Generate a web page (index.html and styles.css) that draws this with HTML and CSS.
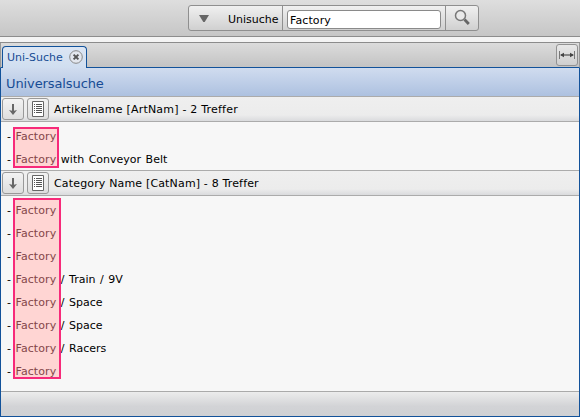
FILE: index.html
```html
<!DOCTYPE html>
<html lang="de">
<head>
<meta charset="utf-8">
<title>Universalsuche</title>
<link rel="stylesheet" href="styles.css">
</head>
<body>
<header class="toolbar">
  <div class="search">
    <button class="scope"><svg class="caret" width="12" height="9" viewBox="0 0 12 9"><path d="M1 1h10L6.7 8H5.3z" fill="#666"/></svg><span>Unisuche</span></button>
    <div class="field"><input type="text" value="Factory"></div>
    <button class="go" aria-label="Suchen"><svg width="18" height="18" viewBox="0 0 18 18" fill="none" stroke="#777"><circle cx="7.500" cy="6.500" r="5" fill="#e9e9e9" stroke-width="1.500"/><path d="M11.500 10.500l4.300 4.500" stroke="#666" stroke-width="2.800"/></svg></button>
  </div>
</header>
<main class="panel">
  <nav class="tabs">
    <div class="tab"><span class="tab-name">Uni-Suche</span><svg width="14" height="14" viewBox="0 0 14 14" fill="none"><circle cx="7" cy="7" r="6.300" fill="#e3e7ee" stroke="#888"/><path d="M4.600 4.600l4.800 4.800M9.400 4.600L4.600 9.400" stroke="#555" stroke-width="2"/></svg></div>
    <button class="fit" aria-label="Breite"><svg width="16" height="8" viewBox="0 0 16 8"><path d="M.5 0v8M15.5 0v8" stroke="#777"/><path d="M2 4h12" stroke="#333"/><path d="M1 4l4-2.200v4.400zM15 4l-4-2.200v4.400z" fill="#444"/></svg></button>
  </nav>
  <div class="content">
    <h1>Universalsuche</h1>
    <section>
      <div class="group">
        <button class="tool"><svg width="22" height="22" viewBox="0 0 22 22"><path d="M11 6v8" stroke="#666" stroke-width="2"/><path d="M7 12l4 1 4-1-4 5z" fill="#666"/></svg></button>
        <button class="tool"><svg width="22" height="22" viewBox="0 0 22 22"><path d="M5.500 3.500h11v15h-11z" fill="#fff" stroke="#666"/><path d="M7 6.500h1m1 0h6M7 8.500h1m1 0h6M7 10.500h1m1 0h6M7 12.500h1m1 0h6M7 14.500h1m1 0h6" stroke="#555"/></svg></button>
        <span class="label artikel">Artikelname [ArtNam] - 2 Treffer</span>
      </div>
      <ul class="hits short">
        <li>- <mark>Factory</mark></li>
        <li>- <mark>Factory</mark> with Conveyor Belt</li>
      </ul>
    </section>
    <section>
      <div class="group">
        <button class="tool"><svg width="22" height="22" viewBox="0 0 22 22"><path d="M11 6v8" stroke="#666" stroke-width="2"/><path d="M7 12l4 1 4-1-4 5z" fill="#666"/></svg></button>
        <button class="tool"><svg width="22" height="22" viewBox="0 0 22 22"><path d="M5.500 3.500h11v15h-11z" fill="#fff" stroke="#666"/><path d="M7 6.500h1m1 0h6M7 8.500h1m1 0h6M7 10.500h1m1 0h6M7 12.500h1m1 0h6M7 14.500h1m1 0h6" stroke="#555"/></svg></button>
        <span class="label">Category Name [CatNam] - 8 Treffer</span>
      </div>
      <ul class="hits long">
        <li>- <mark>Factory</mark></li>
        <li>- <mark>Factory</mark></li>
        <li>- <mark>Factory</mark></li>
        <li>- <mark>Factory</mark> / Train / 9V</li>
        <li>- <mark>Factory</mark> / Space</li>
        <li>- <mark>Factory</mark> / Space</li>
        <li>- <mark>Factory</mark> / Racers</li>
        <li>- <mark>Factory</mark></li>
      </ul>
    </section>
    <footer></footer>
  </div>
</main>
</body>
</html>
```
FILE: styles.css
```css
*, *::before, *::after { box-sizing: border-box; }

body {
  margin: 0;
  height: 417px;
  display: flex;
  flex-direction: column;
  overflow: hidden;
  background: #f4f4f4;
  color: #000;
  font: 11px "DejaVu Sans", Verdana, sans-serif;
}

button {
  display: flex;
  align-items: center;
  justify-content: center;
  margin: 0;
  padding: 0;
  border: 0;
  background: none;
  color: inherit;
  font: inherit;
}

svg { display: block; flex: none; }

.toolbar {
  height: 37px;
  padding: 5px 0 0 188px;
  border-bottom: 1px solid #8d8d8d;
  background: linear-gradient(#dedede, #c6c6c6);
}

.search {
  display: flex;
  width: 291px;
  height: 26px;
  border: 1px solid #8f8f8f;
  border-radius: 3px;
  background: linear-gradient(#f0f0f0, #d0d0d0);
}

.scope { width: 94px; justify-content: flex-start; padding-left: 9px; border-right: 1px solid #8f8f8f; }
.scope span { margin: 2px 0 0 18px; }
.field { width: 163px; padding: 4px 0 0 4px; border-right: 1px solid #8f8f8f; }
.field input {
  display: block;
  width: 154px;
  height: 19px;
  padding: 1px 2px 0;
  border: 1px solid #8a8a8a;
  border-radius: 3px;
  background: #fff;
  font: inherit;
  letter-spacing: .1px;
}
.go { flex: 1; }

.panel {
  flex: 1;
  display: flex;
  flex-direction: column;
  margin-top: 5px;
  border-top: 1px solid #8c8c8c;
}

.tabs {
  display: flex;
  justify-content: space-between;
  height: 25px;
  border-left: 1px solid #999;
  border-right: 1px solid #999;
  border-bottom: 1px solid #12529a;
  background: linear-gradient(#dcdcdc, #c3c3c3);
}

.tab {
  display: flex;
  align-items: center;
  gap: 6px;
  width: 85px;
  height: 22px;
  margin: 3px 0 0 1px;
  padding: 0 0 2px 4px;
  border: 1px solid #12529a;
  border-bottom: 0;
  border-radius: 4px 4px 0 0;
  background: linear-gradient(#dce6f4, #d0def0);
  color: #174c94;
}

.tab-name { width: 56px; padding-top: 1px; white-space: nowrap; }

.fit {
  width: 22px;
  height: 22px;
  margin: 1px 1px 0 0;
  border: 1px solid #929292;
  border-radius: 3px;
  background: linear-gradient(#e8e8e8, #cfcfcf);
}

.content {
  flex: 1;
  display: flex;
  flex-direction: column;
  border: 1px solid #12529a;
  border-top: 0;
  background: #f7f7f7;
}

h1 {
  height: 28px;
  margin: 0;
  padding-left: 5px;
  background: linear-gradient(#d0dcef, #adc1e0);
  color: #174c94;
  font-size: 13px;
  font-weight: normal;
  letter-spacing: -.1px;
  line-height: 31px;
}

.group {
  display: flex;
  align-items: center;
  gap: 3px;
  height: 26px;
  padding-left: 1px;
  border: solid #ababab;
  border-width: 1px 0;
  background: linear-gradient(#efefef, #ececec 75%, #dadbdd);
}

.tool {
  width: 22px;
  height: 22px;
  border: 1px solid #999;
  border-radius: 3px;
  background: linear-gradient(#f3f3f3, #dedede);
}

.label { margin-left: 2px; letter-spacing: .16px; }
.artikel { letter-spacing: .21px; }

.hits {
  position: relative;
  z-index: 0;
  margin: 0;
  padding: 3px 0 0 6px;
  list-style: none;
}

.hits li { height: 23px; line-height: 23px; white-space: pre; word-spacing: 1px; }

mark { background: none; color: #844649; letter-spacing: .1px; }

/* marker over the matched words: fill behind the text, frame in front */
.hits::before,
.hits::after {
  content: "";
  position: absolute;
  left: 12px;
}
.hits::before { z-index: -1; background: #ffd5d3; }
.hits::after { border: 2px solid #f72a7a; }

.short { height: 48px; }
.short::before, .short::after { top: 5px; width: 46px; height: 41px; }
.long { height: 195px; }
.long::before, .long::after { top: 2px; width: 48px; height: 181px; }

footer {
  flex: 1;
  border-top: 1px solid #aaa;
  background: linear-gradient(#ececec, #d2d3d6 60%, #cfd1d4);
}
```
